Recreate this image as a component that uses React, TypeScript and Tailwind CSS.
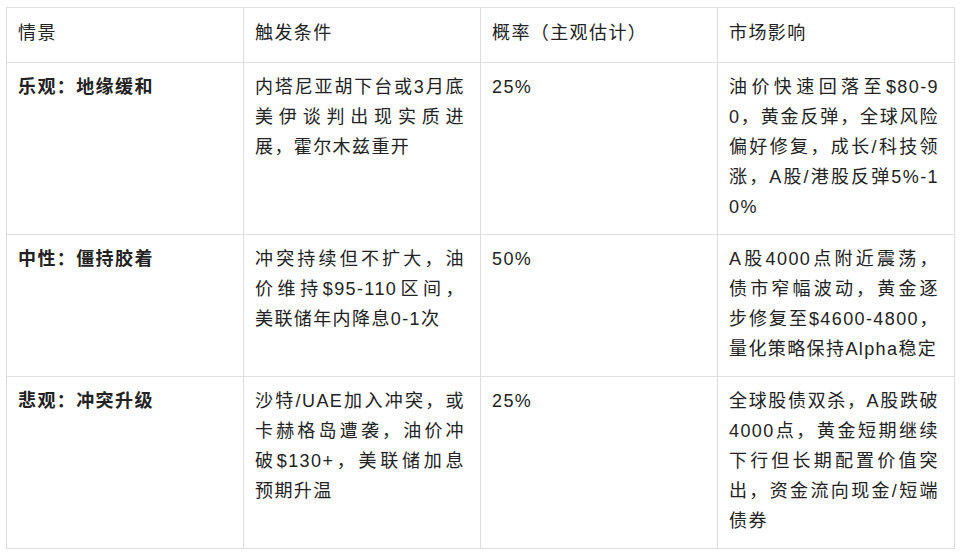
import React from "react";

const rows = [
  {
    s: "乐观：地缘缓和",
    t: "内塔尼亚胡下台或3月底美伊谈判出现实质进展，霍尔木兹重开",
    p: "25%",
    m: "油价快速回落至$80-90，黄金反弹，全球风险偏好修复，成长/科技领涨，A股/港股反弹5%-10%",
  },
  {
    s: "中性：僵持胶着",
    t: "冲突持续但不扩大，油价维持$95-110区间，美联储年内降息0-1次",
    p: "50%",
    m: "A股4000点附近震荡，债市窄幅波动，黄金逐步修复至$4600-4800，量化策略保持Alpha稳定",
  },
  {
    s: "悲观：冲突升级",
    t: "沙特/UAE加入冲突，或卡赫格岛遭袭，油价冲破$130+，美联储加息预期升温",
    p: "25%",
    m: "全球股债双杀，A股跌破4000点，黄金短期继续下行但长期配置价值突出，资金流向现金/短端债券",
  },
];

const cell =
  "border border-[#dedede] align-top pl-[11px] pr-[15px] pt-[9px] pb-[12px] text-justify break-all";
const head =
  "border border-[#dedede] align-top pl-[11px] pr-[15px] pt-[10px] pb-[14px] text-left font-normal";

export default function App() {
  return (
    <div
      lang="zh-CN"
      className="w-[960px] h-[553px] bg-white pl-[6px] pt-[7px] text-[#222] text-[18px] leading-[30px] tracking-[1.4px] overflow-hidden"
      style={{ fontFamily: '"Liberation Sans", "Noto Sans CJK SC", sans-serif' }}
    >
      <table className="table-fixed border-collapse w-[948px]">
        <colgroup>
          <col className="w-[237px]" />
          <col className="w-[237px]" />
          <col className="w-[237px]" />
          <col className="w-[237px]" />
        </colgroup>
        <thead>
          <tr>
            <th className={head}>情景</th>
            <th className={head}>触发条件</th>
            <th className={head}>概率（主观估计）</th>
            <th className={head}>市场影响</th>
          </tr>
        </thead>
        <tbody>
          {rows.map((r) => (
            <tr key={r.s}>
              <td className={cell + " font-bold"}>{r.s}</td>
              <td className={cell}>{r.t}</td>
              <td className={cell}>{r.p}</td>
              <td className={cell}>{r.m}</td>
            </tr>
          ))}
        </tbody>
      </table>
    </div>
  );
}
